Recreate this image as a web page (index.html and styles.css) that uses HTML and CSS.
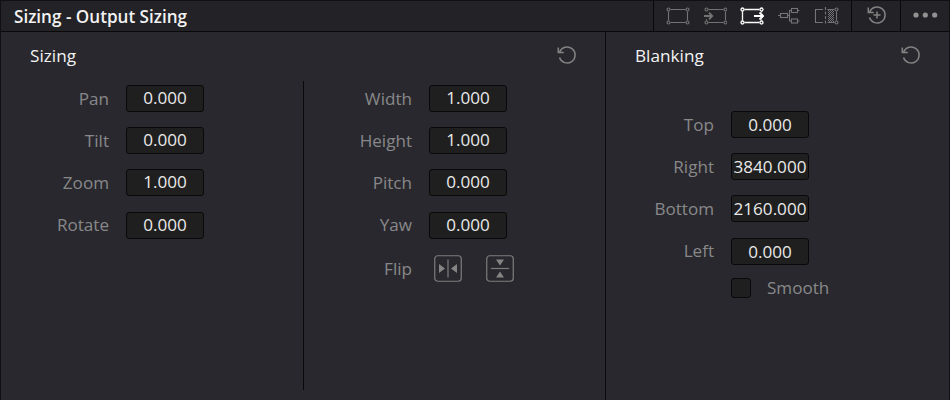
FILE: index.html
```html
<!DOCTYPE html>
<html lang="en">
<head>
<meta charset="utf-8">
<title>Sizing - Output Sizing</title>
<link rel="stylesheet" href="styles.css">
</head>
<body>
<svg class="defs" width="0" height="0">
  <symbol id="frame" viewBox="0 0 24 18">
    <path d="M4.5 2.5h15M4.5 15.5h15M2.5 4.5v9M21.5 4.5v9"/>
    <g><circle cx="2.5" cy="2.5" r="1.5"/><circle cx="21.5" cy="2.5" r="1.5"/><circle cx="2.5" cy="15.5" r="1.5"/><circle cx="21.5" cy="15.5" r="1.5"/></g>
  </symbol>
  <symbol id="reset" viewBox="0 0 20 20">
    <path d="M2.600 7.200A8 8 0 1 1 2.500 12.500M1.300 2.500V7.500H6.800"/>
  </symbol>
</svg>
<div class="panel">
  <header class="bar">
    <h1>Sizing - Output Sizing</h1>
    <nav class="modes">
      <svg class="icon" width="24" height="18"><use href="#frame"/></svg>
      <svg class="icon" width="24" height="18" viewBox="-1 0 24 18">
        <path d="M4.500 2.500h15M4.500 15.500h15M2.500 12v1.500M21.500 4.500v9"/>
        <circle cx="2.500" cy="2.500" r="1.500"/><circle cx="21.500" cy="2.500" r="1.500"/><circle cx="2.500" cy="15.500" r="1.500"/><circle cx="21.500" cy="15.500" r="1.500"/>
        <path class="arrow" d="M0 9h8M5 5.700l3.200 3.300L5 12.300"/>
      </svg>
      <svg class="icon active" width="24" height="18" viewBox="0 0 24 18">
        <path d="M4.500 2.500h15M4.500 15.500h15M2.500 4.500v9M21.500 4.500v1M21.500 12.500v1"/>
        <circle cx="2.500" cy="2.500" r="1.500"/><circle cx="21.500" cy="2.500" r="1.500"/><circle cx="2.500" cy="15.500" r="1.500"/><circle cx="21.500" cy="15.500" r="1.500"/>
        <path class="arrow" d="M14 9h9M19.500 5.500l3.700 3.500-3.700 3.500"/>
      </svg>
      <svg class="icon" width="24" height="18" viewBox="0 0 24 18">
        <path d="M1 8.500h2.500M10.500 8.500h2v-5h2M12.500 8.500v5.500h2M20.500 3.500h2M20.500 14h2"/>
        <rect x="3.500" y="6.500" width="7" height="4"/><rect x="14.500" y="1.500" width="6" height="4"/><rect x="14.500" y="12" width="6" height="4"/>
      </svg>
      <svg class="icon" width="26" height="18" viewBox="0 0 26 18">
        <path d="M9 2.500H1.500v13H9"/>
        <path class="cut" d="M11.500 0v18"/>
        <path class="weave" d="M14.500 3v12M16.500 3v12M18.500 3v12"/>
        <path class="weave" d="M15.500 4v11M17.500 4v11M19.500 4v11"/>
        <path d="M13.500 2.500h7M13.500 15.500h7M22.500 4.500v9"/>
        <circle cx="22.500" cy="2.500" r="1.500"/><circle cx="22.500" cy="15.500" r="1.500"/>
      </svg>
    </nav>
    <div class="cell reset-all">
      <svg class="icon round" width="20" height="20" viewBox="0 0 20 20"><use href="#reset"/><path d="M10 6.500v7M6.500 10h7"/></svg>
    </div>
    <div class="cell more">
      <svg class="dots" width="25" height="6" viewBox="0 0 25 6"><circle cx="3" cy="3" r="2.600"/><circle cx="12.300" cy="3" r="2.600"/><circle cx="21.700" cy="3" r="2.600"/></svg>
    </div>
  </header>
  <main class="body">
    <section class="sizing">
      <div class="head"><h2>Sizing</h2><svg class="icon round" width="20" height="20"><use href="#reset"/></svg></div>
      <div class="columns">
        <div class="fields first">
          <label>Pan</label><output>0.000</output>
          <label>Tilt</label><output>0.000</output>
          <label>Zoom</label><output>1.000</output>
          <label>Rotate</label><output>0.000</output>
        </div>
        <div class="fields second">
          <label>Width</label><output>1.000</output>
          <label>Height</label><output>1.000</output>
          <label>Pitch</label><output>0.000</output>
          <label>Yaw</label><output>0.000</output>
          <label class="flip-label">Flip</label>
          <div class="flips">
            <svg width="28" height="27" viewBox="0 0 28 27"><rect x=".75" y=".75" width="26.500" height="25.500" rx="3"/><path d="M14 4.500v18"/><path class="solid" d="M5 9l6 4.500L5 18zM23 9l-6 4.500 6 4.500z"/></svg>
            <svg width="28" height="27" viewBox="0 0 28 27"><rect x=".75" y=".75" width="26.500" height="25.500" rx="3"/><path d="M5 13.500h18"/><path class="solid" d="M10 4.500h8l-4 6zM10 22.500h8l-4-6z"/></svg>
          </div>
        </div>
      </div>
    </section>
    <section class="blanking">
      <div class="head"><h2>Blanking</h2><svg class="icon round" width="20" height="20"><use href="#reset"/></svg></div>
      <div class="fields third">
        <label>Top</label><output>0.000</output>
        <label>Right</label><output>3840.000</output>
        <label>Bottom</label><output>2160.000</output>
        <label>Left</label><output>0.000</output>
      </div>
      <div class="smooth"><span class="check"></span><span>Smooth</span></div>
    </section>
  </main>
</div>
</body>
</html>
```

FILE: styles.css
```css
* { box-sizing: border-box; }
body { margin: 0; background: #29282e; font: 17.1px/24px "Open Sans", sans-serif; color: #88888a; }
h1, h2 { margin: 0; color: #f2f2f2; }
h1 { font-size: 17.1px; font-weight: 600; line-height: 31px; }
h2 { font-size: 17.2px; font-weight: 400; line-height: 24px; }
.defs { display: none; }
.panel { width: 950px; height: 400px; border: 1px solid #101012; border-bottom: 0; display: flex; flex-direction: column; }
.bar { height: 31px; flex: none; display: flex; background: #232226; border-bottom: 1px solid #09090a; }
.bar h1 { flex: 1; padding-left: 13px; }
.modes { width: 198px; border-left: 1px solid #09090a; display: flex; gap: 13px; padding: 6px 0 0 12px; }
.cell { border-left: 1px solid #09090a; display: flex; }
.reset-all { width: 49px; padding: 4px 0 0 15px; }
.more { width: 49px; padding: 11px 0 0 12px; }
.dots { fill: #929292; }
.icon { display: block; flex: none; fill: none; stroke: #747474; stroke-width: 1.1; }
.icon.active { stroke: #fff; stroke-width: 1.3; }
.icon .arrow { stroke-width: 1.8; }
.icon .cut { stroke-dasharray: 3 1.5; }
.icon .weave { stroke-dasharray: 1 1; stroke-width: 1; }
.icon.round { stroke: #828282; stroke-width: 1.5; }
.body { flex: 1; display: flex; }
.sizing { width: 605px; border-right: 1px solid #09090a; }
.blanking { flex: 1; }
.head { height: 49px; padding: 12px 28px 0 29px; display: flex; justify-content: space-between; }
.head .icon { margin-top: 1px; }
.columns { display: flex; height: 309px; }
.fields { display: grid; grid-auto-rows: 27px; row-gap: 15.2px; column-gap: 17px; align-content: start; align-items: center; }
.fields label { text-align: right; }
.first { width: 303px; grid-template-columns: 79px 78px; padding: 4px 0 0 29px; border-right: 1px solid #09090a; }
.second { grid-template-columns: 79px 78px; padding: 4px 0 0 29px; }
.third { grid-template-columns: 79px 78px; padding: 30px 0 0 29px; }
output { height: 27px; background: #1f1f1f; border: 1px solid #09090a; border-radius: 3px; color: #e9e9e9; text-align: center; line-height: 24px; display: flex; justify-content: center; }
.third output { line-height: 25px; }
.flip-label { margin-top: 3px; }
.flips { display: flex; gap: 24px; padding-left: 5px; margin-top: 2px; }
.flips svg { flex: none; fill: none; stroke: #7d7d7d; stroke-width: 1.2; }
.flips .solid { fill: #858585; stroke: none; }
.smooth { display: flex; align-items: center; gap: 16px; padding: 11px 0 0 125px; }
.check { width: 20px; height: 20px; background: #1f1f1f; border: 1px solid #09090a; border-radius: 3px; }
```
